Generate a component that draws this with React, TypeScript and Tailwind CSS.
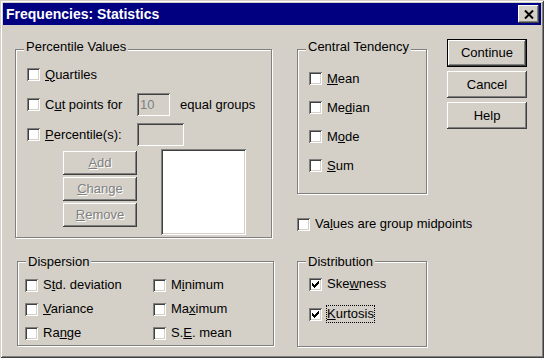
import type { ReactNode } from "react";

const bevel =
  "shadow-[inset_-1px_-1px_#404040,inset_1px_1px_#fff,inset_-2px_-2px_#808080,inset_2px_2px_#d4d0c8]";
const sunken =
  "shadow-[inset_1px_1px_#808080,inset_-1px_-1px_#fff,inset_2px_2px_#404040,inset_-2px_-2px_#d4d0c8]";

function Check({ checked = false }: { checked?: boolean }) {
  return (
    <span className={`flex h-[13px] w-[13px] shrink-0 items-center justify-center bg-white ${sunken}`}>
      {checked && (
        <svg width="7" height="7" viewBox="0 0 7 7" shapeRendering="crispEdges">
          <path
            d="M6 0h1v1h-1zM5 1h2v1h-2zM0 2h1v1h-1zM4 2h3v1h-3zM0 3h2v1h-2zM3 3h3v1h-3zM0 4h5v1h-5zM1 5h3v1h-3zM2 6h1v1h-1z"
            fill="#000"
          />
        </svg>
      )}
    </span>
  );
}

function Option({
  label,
  checked,
  focused,
  className = "",
}: {
  label: ReactNode;
  checked?: boolean;
  focused?: boolean;
  className?: string;
}) {
  return (
    <div className={`flex items-center gap-[5px] ${className}`}>
      <Check checked={checked} />
      <span
        className={
          focused
            ? "leading-[16px] whitespace-nowrap outline-1 outline-dotted outline-black"
            : "leading-[16px] whitespace-nowrap"
        }
      >
        {label}
      </span>
    </div>
  );
}

function Btn({
  children,
  disabled,
  className = "",
}: {
  children: ReactNode;
  disabled?: boolean;
  className?: string;
}) {
  return (
    <div
      className={`flex items-center justify-center leading-[16px] ${bevel} ${
        disabled ? "text-[#808080] [text-shadow:1px_1px_#fff]" : ""
      } ${className}`}
    >
      {children}
    </div>
  );
}

function Group({
  title,
  labelClass,
  className = "",
  children,
}: {
  title: string;
  labelClass: string;
  className?: string;
  children: ReactNode;
}) {
  return (
    <div className={`border border-[#808080] shadow-[inset_1px_1px_#fff,1px_1px_#fff] ${className}`}>
      <div className={`ml-[8px] w-fit bg-[#d4d0c8] px-[2px] leading-[16px] ${labelClass}`}>{title}</div>
      {children}
    </div>
  );
}

function Field({ className = "", children }: { className?: string; children?: ReactNode }) {
  return (
    <div className={`flex shrink-0 items-center bg-[#d4d0c8] pl-[3px] text-[#808080] ${sunken} ${className}`}>
      {children}
    </div>
  );
}

export default function App() {
  return (
    <div className="h-[358px] w-[544px] overflow-hidden bg-[#d4d0c8] font-['Liberation_Sans',Arial,sans-serif] text-[13px] text-black shadow-[inset_1px_1px_#d4d0c8,inset_-1px_-1px_#404040,inset_2px_2px_#fff,inset_-2px_-2px_#808080]">
      <div className="mx-[3px] mt-[3px] flex h-[22px] items-center justify-between bg-[#000080] pl-[3px] pr-[2px]">
        <span className="text-[14px] font-bold leading-[16px] text-white">Frequencies: Statistics</span>
        <div className={`flex h-[18px] w-[21px] items-center justify-center bg-[#d4d0c8] ${bevel}`}>
          <svg width="10" height="9" viewBox="0 0 10 9">
            <path d="M1 0.5L9 8.5M9 0.5L1 8.5" stroke="#000" strokeWidth="2" />
          </svg>
        </div>
      </div>

      <div className="flex pl-[15px]">
        <div className="mt-[24px] flex w-[259px] flex-col">
          <Group title="Percentile Values" labelClass="-mt-[11px]" className="h-[189px] w-[257px]">
            <div className="pl-[11px]">
              <Option className="mt-[8px] h-[23px]" label={<><u>Q</u>uartiles</>} />
              <div className="mt-[7px] flex h-[23px] items-center">
                <Check />
                <span className="ml-[5px] w-[92px] leading-[16px]">
                  C<u>u</u>t points for
                </span>
                <Field className="h-[23px] w-[33px]">10</Field>
                <span className="ml-[10px] leading-[16px]">equal groups</span>
              </div>
              <div className="mt-[7px] flex h-[23px] items-center">
                <Check />
                <span className="ml-[5px] w-[92px] leading-[16px]">
                  <u>P</u>ercentile(s):
                </span>
                <Field className="h-[23px] w-[47px]" />
              </div>
              <div className="mt-[3px] ml-[36px] flex">
                <div className="flex flex-col gap-[2px] pt-[2px]">
                  <Btn disabled className="h-[24px] w-[74px]">
                    <span>
                      <u>A</u>dd
                    </span>
                  </Btn>
                  <Btn disabled className="h-[24px] w-[74px]">
                    <span>
                      <u>C</u>hange
                    </span>
                  </Btn>
                  <Btn disabled className="h-[24px] w-[74px]">
                    <span>
                      <u>R</u>emove
                    </span>
                  </Btn>
                </div>
                <div className={`ml-[24px] h-[86px] w-[85px] bg-white ${sunken}`} />
              </div>
            </div>
          </Group>

          <Group title="Dispersion" labelClass="-mt-[8px]" className="mt-[23px] ml-[2px] h-[85px] w-[257px]">
            <div className="mt-[3px] grid grid-cols-[128px_auto] pl-[7px]">
              <Option className="h-[24px]" label={<>S<u>t</u>d. deviation</>} />
              <Option className="h-[24px]" label={<>M<u>i</u>nimum</>} />
              <Option className="h-[24px]" label={<><u>V</u>ariance</>} />
              <Option className="h-[24px]" label={<>Ma<u>x</u>imum</>} />
              <Option className="h-[24px]" label={<>Ra<u>n</u>ge</>} />
              <Option className="h-[24px]" label={<>S.<u>E</u>. mean</>} />
            </div>
          </Group>
        </div>

        <div className="mt-[24px] ml-[23px] flex w-[130px] flex-col">
          <Group title="Central Tendency" labelClass="-mt-[11px]" className="h-[145px] w-[130px]">
            <div className="mt-[9px] pl-[11px]">
              <Option className="h-[29px]" label={<><u>M</u>ean</>} />
              <Option className="h-[29px]" label={<>Me<u>d</u>ian</>} />
              <Option className="h-[29px]" label={<>M<u>o</u>de</>} />
              <Option className="h-[29px]" label={<><u>S</u>um</>} />
            </div>
          </Group>

          <Option className="mt-[22px] h-[16px]" label={<>Va<u>l</u>ues are group midpoints</>} />

          <Group title="Distribution" labelClass="-mt-[8px]" className="mt-[29px] h-[86px] w-[130px]">
            <div className="-mt-[1px] pl-[11px]">
              <Option className="h-[30px]" checked label={<>Ske<u>w</u>ness</>} />
              <Option className="h-[30px]" checked focused label={<><u>K</u>urtosis</>} />
            </div>
          </Group>
        </div>

        <div className="mt-[14px] ml-[20px] flex flex-col gap-[4px]">
          <div className="h-[28px] w-[80px] border border-black">
            <Btn className="h-full w-full">Continue</Btn>
          </div>
          <Btn className="h-[27px] w-[80px]">Cancel</Btn>
          <Btn className="h-[27px] w-[80px]">Help</Btn>
        </div>
      </div>
    </div>
  );
}
